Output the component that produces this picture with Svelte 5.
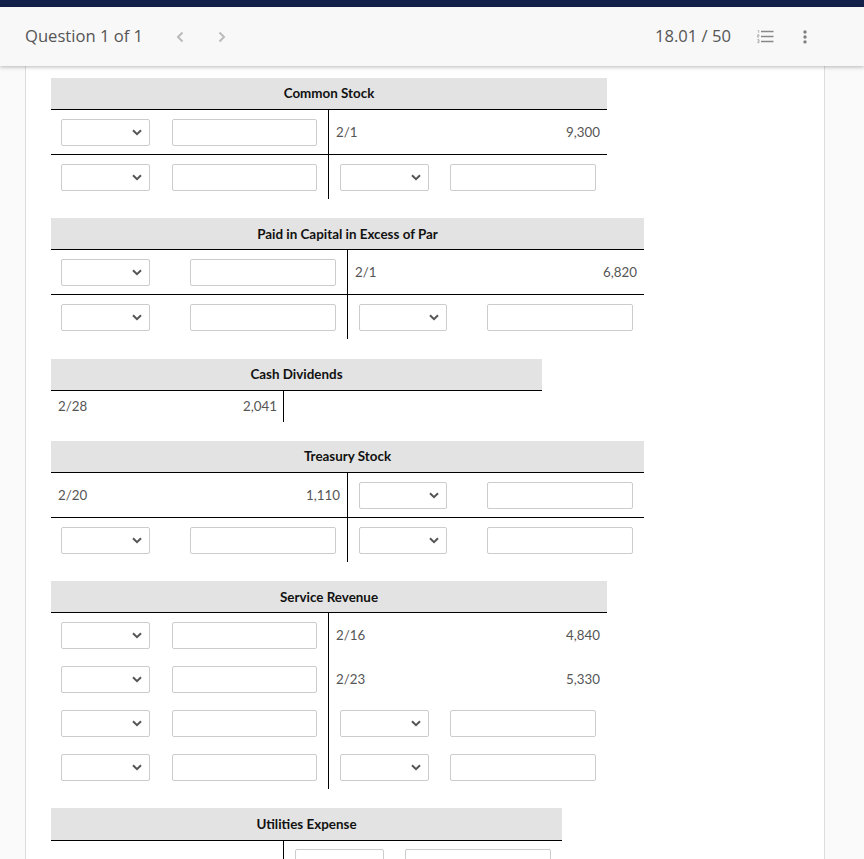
<script>
  const blank = { blank: true }
  const accounts = [
    { title: 'Common Stock', left: 277, right: 278, lined: true, tight: true, rows: [
      { l: blank, r: ['2/1', '9,300'] },
      { l: blank, r: blank }
    ] },
    { title: 'Paid in Capital in Excess of Par', left: 296, right: 296, lined: true, wide: true, drop: true, rows: [
      { l: blank, r: ['2/1', '6,820'] },
      { l: blank, r: blank }
    ] },
    { title: 'Cash Dividends', left: 232, right: 258, short: true, rows: [
      { l: ['2/28', '2,041'], r: null }
    ] },
    { title: 'Treasury Stock', left: 296, right: 296, lined: true, wide: true, rows: [
      { l: ['2/20', '1,110'], r: blank },
      { l: blank, r: blank }
    ] },
    { title: 'Service Revenue', left: 277, right: 278, tight: true, drop: true, rows: [
      { l: blank, r: ['2/16', '4,840'] },
      { l: blank, r: ['2/23', '5,330'] },
      { l: blank, r: blank },
      { l: blank, r: blank }
    ] },
    { title: 'Utilities Expense', left: 232, right: 278, low: true, drop: true, rows: [
      { l: ['2/28', ''], r: blank }
    ] }
  ]

  const isText = (c) => Array.isArray(c)
</script>

{#snippet cell(c)}
  {#if c && c.blank}
    <span class="select">
      <select aria-label="Account"><option></option></select>
      <svg viewBox="0 0 10 7" width="10" height="7"><path d="M1 1.2 5 5.2 9 1.2" fill="none" stroke="#555" stroke-width="2"/></svg>
    </span>
    <input type="text" aria-label="Amount" />
  {:else if c}
    <span>{c[0]}</span>
    <span>{c[1]}</span>
  {/if}
{/snippet}

<div class="page">
  <div class="topbar"></div>
  <header>
    <div class="crumb">
      <span class="count">Question 1 of 1</span>
      <svg class="nav" viewBox="0 0 8 12" width="8" height="12"><path d="M6.5 1.5 2 6l4.5 4.5" fill="none" stroke="#bbb" stroke-width="2"/></svg>
      <svg class="nav" viewBox="0 0 8 12" width="8" height="12"><path d="M1.5 1.5 6 6l-4.5 4.5" fill="none" stroke="#bbb" stroke-width="2"/></svg>
    </div>
    <div class="tools">
      <span class="count">18.01 / 50</span>
      <svg class="list" viewBox="0 0 17 14" width="17" height="14">
        <path d="M4 1.5h12.5M4 6.5h12.5M4 11.5h12.5" stroke="#888" stroke-width="1.5" fill="none"/>
        <path d="M.6 .4h1.1v2.4M.3 4.8h1.7v1.1H.4v1.2h1.7M.3 9.6h1.7v3H.3M.7 11.1H2" stroke="#999" stroke-width=".7" fill="none"/>
      </svg>
      <svg class="more" viewBox="0 0 4 14" width="4" height="14"><circle cx="2" cy="2" r="1.7" fill="#808080"/><circle cx="2" cy="7" r="1.7" fill="#808080"/><circle cx="2" cy="11.9" r="1.7" fill="#808080"/></svg>
    </div>
  </header>

  <main>
    <div class="card">
      {#each accounts as a}
        <section class="account" style="width: {a.left + a.right + 1}px">
          <h3 class:drop={a.drop}>{a.title}</h3>
          {#each a.rows as row}
            <div class="row" class:lined={a.lined} class:short={a.short} class:low={a.low} class:tight={a.tight} class:wide={a.wide}>
              <div class="side left" class:text={isText(row.l)} style="width: {a.left + 1}px">{@render cell(row.l)}</div>
              <div class="side" class:text={isText(row.r)} style="width: {a.right}px">{@render cell(row.r)}</div>
            </div>
          {/each}
        </section>
      {/each}
    </div>
  </main>
</div>

<style>
  :global(body) {
    margin: 0;
    background: #fafafa;
  }

  .page {
    height: 859px;
    overflow: hidden;
    display: flex;
    flex-direction: column;
    font-family: Lato, "Liberation Sans", sans-serif;
  }

  .topbar {
    height: 7px;
    background: #14214b;
    flex: none;
  }

  header {
    flex: none;
    height: 59px;
    display: flex;
    align-items: center;
    justify-content: space-between;
    padding: 0 57px 0 25px;
    background: #f8f8f8;
    box-shadow: 0 1px 4px rgba(0, 0, 0, 0.28);
    position: relative;
    z-index: 1;
  }

  .crumb, .tools {
    display: flex;
    align-items: center;
  }

  .count {
    font-family: "Open Sans", sans-serif;
    font-size: 16.6px;
    color: #555;
    padding-bottom: 2px;
  }

  .nav {
    margin-left: 34px;
  }

  .crumb .count + .nav {
    margin-left: 33px;
  }

  .list {
    margin-left: 26px;
  }

  .more {
    margin-left: 29px;
  }

  main {
    flex: 1;
    padding: 0 39px 0 25px;
    min-height: 0;
  }

  .card {
    background: #fff;
    border: solid #ddd;
    border-width: 0 1px;
    padding: 12px 25px 0;
    height: 100%;
  }

  .account {
    margin-bottom: 19.09px;
  }

  h3 {
    margin: 0;
    height: 31.2px;
    line-height: 31.6px;
    background: #e3e3e3;
    border-bottom: 1px solid #000;
    text-align: center;
    font-size: 13.4px;
    font-weight: 700;
    color: #111;
  }

  h3.drop {
    line-height: 32.14px;
  }

  .row {
    display: flex;
    font-size: 13.33px;
    color: #555;
  }

  .row.lined:not(:last-child) {
    border-bottom: 1px solid #000;
  }

  .side {
    height: 44px;
    box-sizing: border-box;
    padding: 9px 11px 8px;
    display: flex;
    align-items: center;
    justify-content: space-between;
    flex: none;
  }

  .side.left {
    border-right: 1px solid #000;
    padding-left: 10px;
  }

  .side.text {
    padding: 0 7px 0.4px;
  }

  .row.short .side {
    height: 31px;
    padding: 0 6px 0 7px;
  }

  .row.low .side {
    padding-top: 8px;
  }

  .row.low .side.text {
    padding: 4px 7px 0;
  }

  .row.tight .left input {
    width: 145px;
  }

  .select {
    position: relative;
    display: block;
    width: 89px;
    height: 27px;
    flex: none;
  }

  .row.wide .side:not(.left) .select {
    width: 88px;
  }

  select {
    appearance: none;
    display: block;
    width: 100%;
    height: 100%;
    margin: 0;
    background: #fff;
    border: 1px solid #ccc;
    border-radius: 2px;
    box-sizing: border-box;
  }

  .select svg {
    position: absolute;
    right: 8px;
    top: 10px;
    pointer-events: none;
  }

  input {
    width: 146px;
    height: 27px;
    box-sizing: border-box;
    margin: 0;
    background: #fff;
    border: 1px solid #ccc;
    border-radius: 2px;
    flex: none;
  }
</style>
